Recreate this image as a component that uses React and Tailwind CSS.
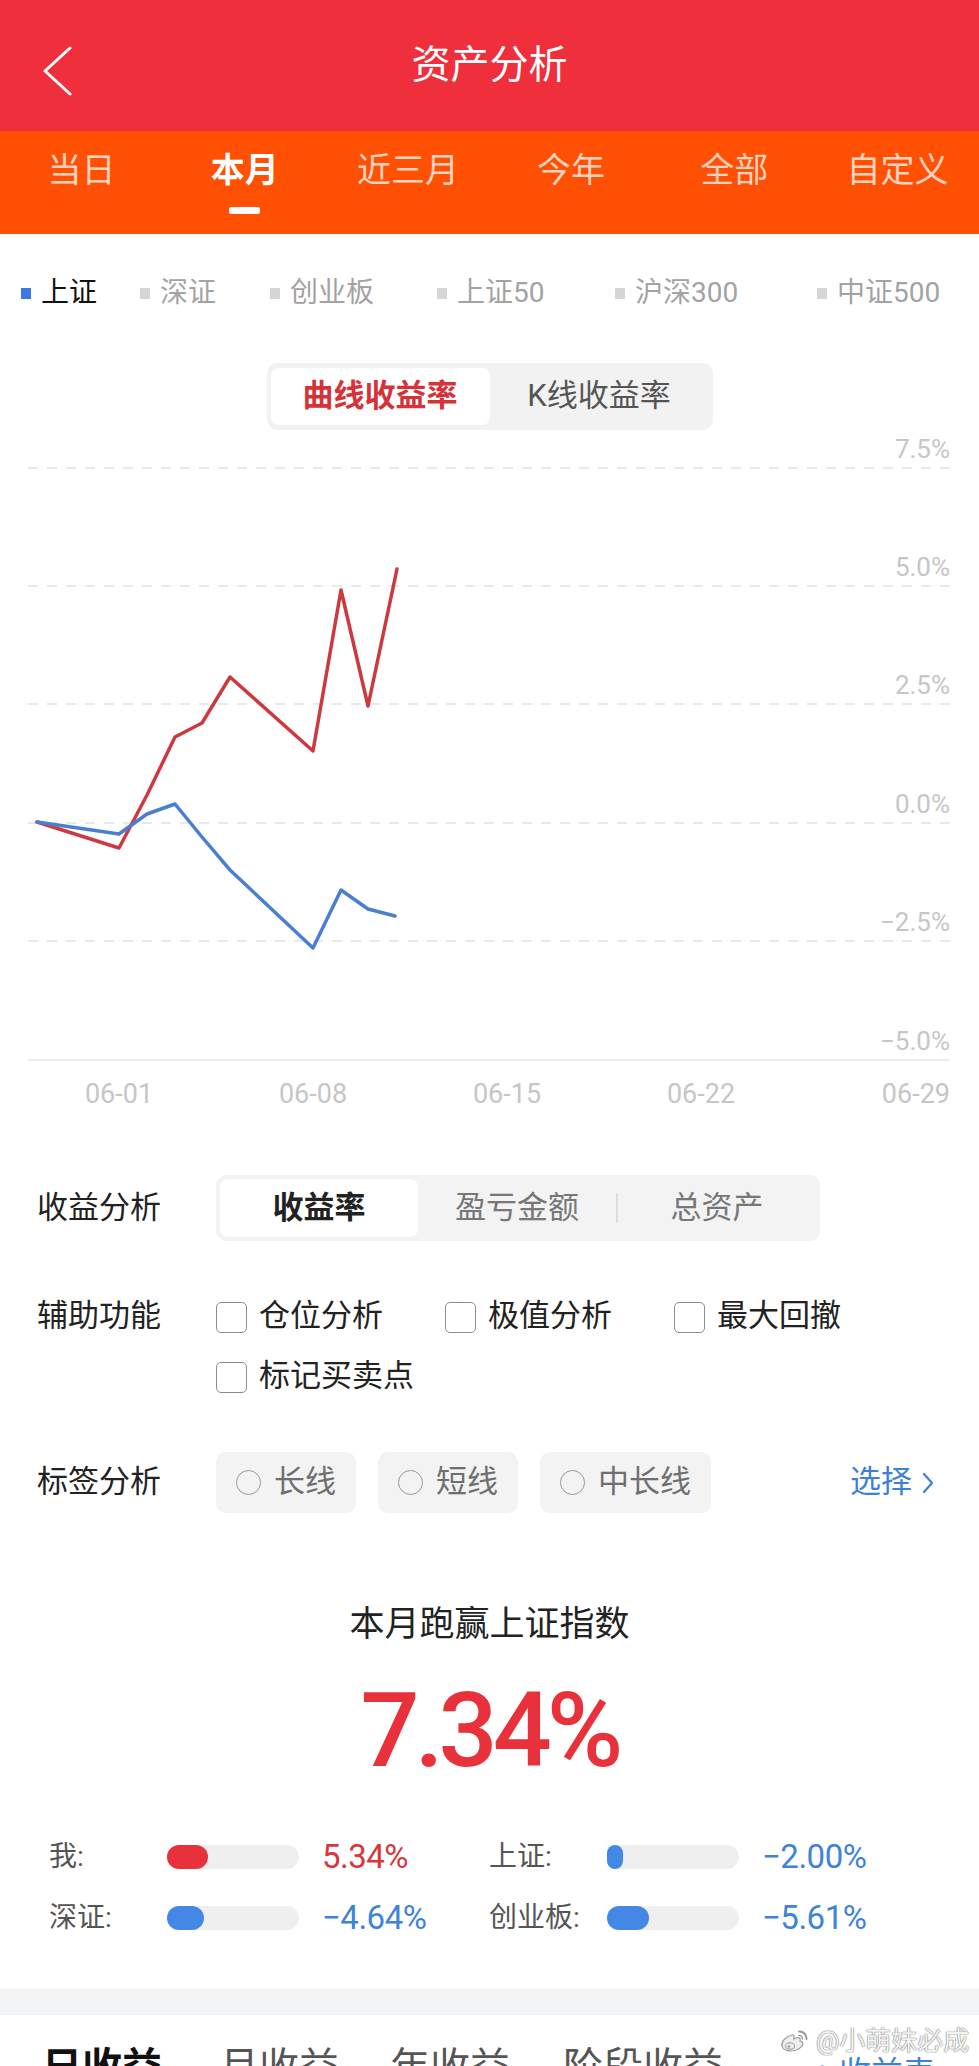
const tabs = ['当日', '本月', '近三月', '今年', '全部', '自定义'];
const legend = [
  { t: '上证', w: 'w-[119px]', active: true },
  { t: '深证', w: 'w-[130px]' },
  { t: '创业板', w: 'w-[167px]' },
  { t: '上证50', w: 'w-[178px]' },
  { t: '沪深300', w: 'w-[202px]' },
  { t: '中证500', w: 'w-[140px]' },
];
const grid = [468, 586, 704, 823, 941];
const ylabels = [
  ['7.5%', 468],
  ['5.0%', 586],
  ['2.5%', 704],
  ['0.0%', 823],
  ['−2.5%', 941],
  ['−5.0%', 1060],
];
const red = '37,822 119,848 147,795 175,737 202,723 230,677 313,751 341,590 368,706 397,569';
const blue = '37,822 119,834 147,814 175,804 202,837 230,870 313,948 341,890 368,909 395,916';

function Bar({ label, fill, color, value, vcolor }) {
  return (
    <div className="h-[40px] flex items-center">
      <span className="w-[118px] text-[28px] text-[#555]">{label}</span>
      <div className="w-[132px] h-[24px] rounded-full bg-[#efefef] flex">
        <div className={`h-[24px] rounded-full ${color}`} style={{ width: fill }} />
      </div>
      <span className={`ml-[23px] text-[33px] tracking-[-0.5px] ${vcolor}`}>{value}</span>
    </div>
  );
}

export default function App() {
  return (
    <div className="relative w-[979px] h-[2066px] overflow-hidden bg-white font-['Roboto','Noto_Sans_CJK_SC',sans-serif]">
      {/* header */}
      <div className="h-[131px] bg-[#ef2f3b] grid grid-cols-[1fr_auto_1fr] items-center">
        <div className="self-start pt-[46px] pl-[42px]">
          <svg width="30" height="50" viewBox="0 0 30 50" className="block">
            <path d="M28 2 L3 25 L28 48" stroke="#fff" strokeWidth="3" fill="none" strokeLinecap="round" strokeLinejoin="round" />
          </svg>
        </div>
        <div className="text-white text-[39px] leading-none">资产分析</div>
        <div />
      </div>

      {/* period tabs */}
      <div className="h-[103px] bg-[#ff5003] grid grid-cols-6">
        {tabs.map((t, i) => (
          <div key={t} className="flex flex-col items-center pt-[19px]">
            <span className={i === 1 ? 'text-[34px] leading-[40px] text-white font-bold' : 'text-[34px] leading-[40px] text-[#ffd3c0]'}>{t}</span>
            {i === 1 && <span className="mt-[17px] w-[31px] h-[7px] rounded-[2px] bg-white" />}
          </div>
        ))}
      </div>

      {/* index legend */}
      <div className="flex pl-[21px] pt-[39px]">
        {legend.map((l) => (
          <div key={l.t} className={`${l.w} flex items-center gap-[10px] h-[40px]`}>
            <span className={l.active ? 'w-[10px] h-[11px] bg-[#3a7ae0]' : 'w-[10px] h-[11px] bg-[#d6d6d6]'} />
            <span className={l.active ? 'text-[28px] text-[#111]' : 'text-[28px] text-[#a3a3a3]'}>{l.t}</span>
          </div>
        ))}
      </div>

      {/* chart type toggle */}
      <div className="mt-[50px] mx-auto w-[446px] h-[67px] bg-[#f2f2f2] rounded-[10px] px-[4px] py-[5px] grid grid-cols-2">
        <div className="bg-white rounded-[8px] flex items-center justify-center text-[31px] font-bold text-[#d6323a]">曲线收益率</div>
        <div className="flex items-center justify-center text-[31px] text-[#555]">K线收益率</div>
      </div>

      {/* chart */}
      <svg width="979" height="690" viewBox="0 430 979 690" className="block">
        {grid.map((y) => (
          <line key={y} x1="28" x2="950" y1={y} y2={y} stroke="#e9e9e9" strokeWidth="2" strokeDasharray="10 9" />
        ))}
        <line x1="28" x2="950" y1="1060" y2="1060" stroke="#ececec" strokeWidth="2" />
        {ylabels.map(([t, y]) => (
          <text key={t} x="950" y={y - 10} textAnchor="end" fontSize="26" fill="#c6c6c6">{t}</text>
        ))}
        {[
          ['06-01', 119],
          ['06-08', 313],
          ['06-15', 507],
          ['06-22', 701],
        ].map(([t, x]) => (
          <text key={t} x={x} y="1103" textAnchor="middle" fontSize="27" fill="#c6c6c6">{t}</text>
        ))}
        <text x="950" y="1103" textAnchor="end" fontSize="27" fill="#c6c6c6">06-29</text>
        <polyline points={red} fill="none" stroke="#cc3a40" strokeWidth="3.5" strokeLinejoin="round" strokeLinecap="round" />
        <polyline points={blue} fill="none" stroke="#4a7fd0" strokeWidth="3.5" strokeLinejoin="round" strokeLinecap="round" />
      </svg>

      {/* options */}
      <div className="px-[37px]">
        <div className="flex items-center mt-[55px]">
          <div className="w-[179px] text-[31px] text-[#222]">收益分析</div>
          <div className="w-[604px] h-[66px] bg-[#f3f3f3] rounded-[10px] p-[4px] grid grid-cols-[1fr_1fr_2px_1fr] items-center">
            <div className="h-full bg-white rounded-[8px] flex items-center justify-center text-[31px] font-bold text-[#222]">收益率</div>
            <div className="h-full flex items-center justify-center text-[31px] text-[#777]">盈亏金额</div>
            <div className="h-[30px] bg-[#dddddd]" />
            <div className="h-full flex items-center justify-center text-[31px] text-[#777]">总资产</div>
          </div>
        </div>

        <div className="flex mt-[52px]">
          <div className="w-[179px] h-[46px] flex items-center text-[31px] text-[#222]">辅助功能</div>
          <div className="grid grid-cols-[229px_229px_229px] gap-y-[14px]">
            {['仓位分析', '极值分析', '最大回撤', '标记买卖点'].map((t) => (
              <div key={t} className="h-[46px] flex items-center gap-[12px]">
                <span className="w-[31px] h-[31px] mt-[3px] border-[1.5px] border-[#8c8c8c] rounded-[5px]" />
                <span className="text-[31px] text-[#222]">{t}</span>
              </div>
            ))}
          </div>
        </div>

        <div className="flex items-center mt-[53px]">
          <div className="w-[179px] text-[31px] text-[#222]">标签分析</div>
          <div className="flex gap-[22px]">
            {['长线', '短线', '中长线'].map((t) => (
              <div key={t} className="h-[61px] px-[20px] bg-[#f3f3f3] rounded-[10px] flex items-center gap-[13px]">
                <span className="w-[25px] h-[25px] rounded-full border-[1.5px] border-[#999]" />
                <span className="text-[31px] text-[#6f6f6f]">{t}</span>
              </div>
            ))}
          </div>
          <div className="ml-auto pr-[8px] flex items-center gap-[10px] text-[31px] text-[#3d80d8]">
            <span>选择</span>
            <svg width="12" height="22" viewBox="0 0 12 22" className="block">
              <path d="M2 2 L10 11 L2 20" stroke="#3d80d8" strokeWidth="2.2" fill="none" strokeLinecap="round" strokeLinejoin="round" />
            </svg>
          </div>
        </div>
      </div>

      {/* summary */}
      <div className="mt-[90px] text-center text-[35px] leading-[44px] text-[#222]">本月跑赢上证指数</div>
      <div className="mt-[32px] text-center text-[104px] leading-none font-medium tracking-[-5px] text-[#e8313a]">7.34%</div>

      <div className="mt-[54px] pl-[49px] grid grid-cols-[440px_auto] gap-y-[21px]">
        <Bar label="我:" fill="41px" color="bg-[#e8313a]" value="5.34%" vcolor="text-[#d9363e]" />
        <Bar label="上证:" fill="16px" color="bg-[#4388e6]" value="−2.00%" vcolor="text-[#3f83d9]" />
        <Bar label="深证:" fill="37px" color="bg-[#4388e6]" value="−4.64%" vcolor="text-[#3f83d9]" />
        <Bar label="创业板:" fill="42px" color="bg-[#4388e6]" value="−5.61%" vcolor="text-[#3f83d9]" />
      </div>

      <div className="mt-[51px] h-[26px] bg-[#f3f4f6]" />

      {/* bottom tabs */}
      <div className="mt-[33px] flex items-start pl-[42px] leading-none">
        <span className="text-[40px] font-bold text-[#111]">日收益</span>
        <span className="ml-[57px] text-[40px] text-[#555]">月收益</span>
        <span className="ml-[51px] text-[40px] text-[#555]">年收益</span>
        <span className="ml-[53px] text-[40px] text-[#555]">阶段收益</span>
        <span className="ml-[90px] mt-[9px] text-[32px] text-[#3d80d8]">+ 收益表</span>
      </div>

      {/* watermark */}
      <div className="absolute left-[780px] top-[2028px] flex items-center gap-[6px]">
        <svg width="30" height="24" viewBox="0 0 30 24" className="block">
          <path d="M12 6 C5 8 1 13 2 17 C3 22 11 23 16 21 C22 19 24 15 22 13 C21 12 20 12 20 12 C21 9 19 8 16 9 C15 9 14 10 14 10 C14 7 14 5 12 6Z" fill="#eeeeee" stroke="#9a9a9a" strokeWidth="1.2" />
          <ellipse cx="10" cy="17" rx="4.5" ry="3.2" fill="none" stroke="#9a9a9a" strokeWidth="1" />
          <circle cx="9" cy="17.5" r="1.3" fill="#9a9a9a" />
          <path d="M19 2.5 A7 7 0 0 1 26.5 10" stroke="#9a9a9a" strokeWidth="2" fill="none" strokeLinecap="round" />
          <path d="M19 6.5 A3.5 3.5 0 0 1 22.5 10" stroke="#9a9a9a" strokeWidth="1.6" fill="none" strokeLinecap="round" />
        </svg>
        <span className="text-[26px] leading-none text-[#f2f2f2] [text-shadow:0_0_1.5px_#777,0_0_1px_#777]">@小萌妹必成</span>
      </div>
    </div>
  );
}
